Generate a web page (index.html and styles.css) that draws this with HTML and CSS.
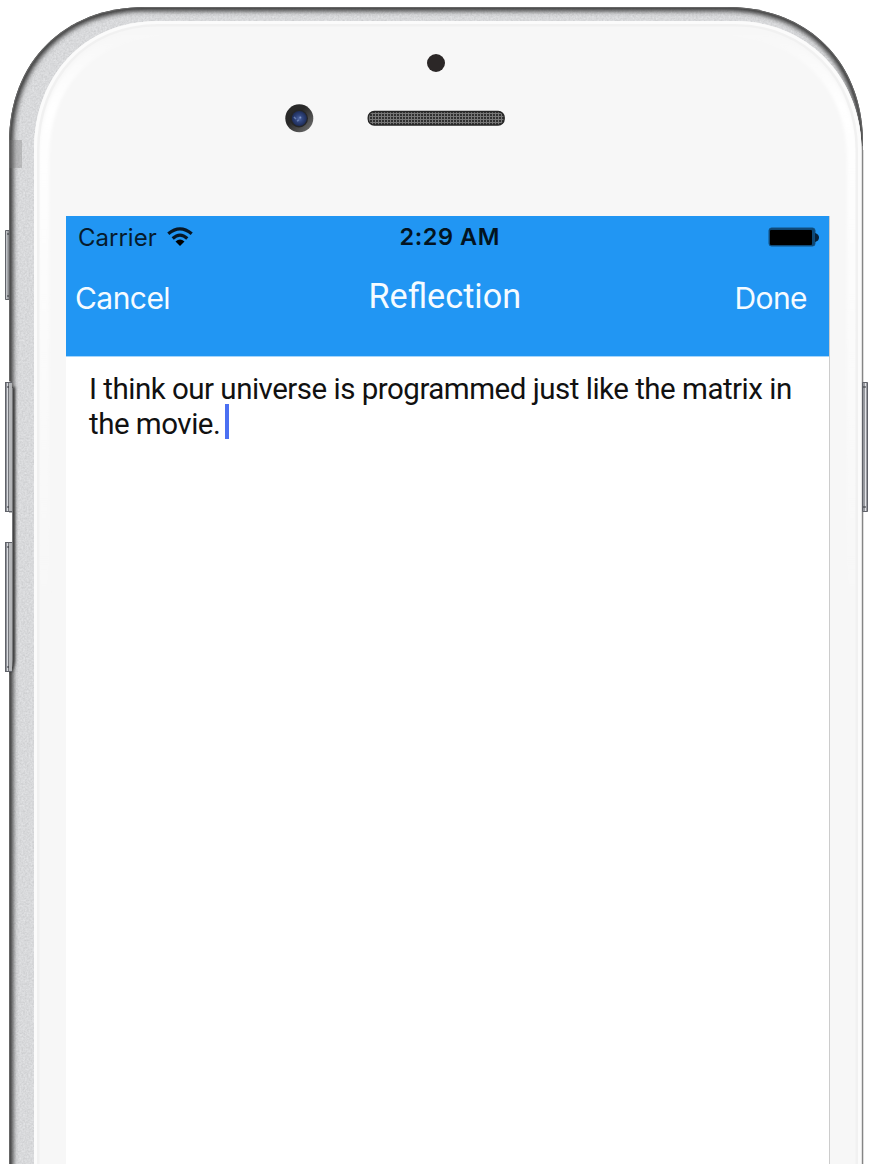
FILE: index.html
```html
<!DOCTYPE html>
<html lang="en">
<head>
<meta charset="utf-8">
<title>Reflection</title>
<link rel="stylesheet" href="styles.css">
</head>
<body>
<main class="phone">
  <svg class="device" width="873" height="1164" viewBox="0 0 873 1164" aria-hidden="true">
    <defs>
      <clipPath id="shell"><path d="M9 1180V143C9 62 64 7 145 7H727C808 7 863 62 863 143V1180Z"/></clipPath>
      <clipPath id="glass"><path d="M34 1180V150C34 76 84 21 158 21H735C806 21 861 76 861.500 150V1180Z"/></clipPath>
      <filter id="grain" x="0" y="0" width="100%" height="100%" color-interpolation-filters="sRGB">
        <feTurbulence type="fractalNoise" baseFrequency=".55" numOctaves="2" seed="4"/>
        <feColorMatrix values=".13 0 0 0 .782  .13 0 0 0 .786  .13 0 0 0 .794  0 0 0 0 1"/>
      </filter>
      <filter id="soft" filterUnits="userSpaceOnUse" x="0" y="0" width="873" height="1190"><feGaussianBlur stdDeviation="2.8"/></filter>
      <filter id="soft1" filterUnits="userSpaceOnUse" x="0" y="0" width="873" height="1190"><feGaussianBlur stdDeviation="1.5"/></filter>
      <linearGradient id="shine" x1="0" y1="30" x2="0" y2="620" gradientUnits="userSpaceOnUse">
        <stop offset="0" stop-color="#fff" stop-opacity="0"/><stop offset=".13" stop-color="#fff"/><stop offset=".35" stop-color="#fff" stop-opacity=".7"/><stop offset="1" stop-color="#fff" stop-opacity="0"/>
      </linearGradient>
      <linearGradient id="key"><stop offset="0" stop-color="#55575d"/><stop offset=".2" stop-color="#868990"/><stop offset=".34" stop-color="#e6e8ec"/><stop offset=".48" stop-color="#65676d"/><stop offset=".6" stop-color="#b8babd"/><stop offset="1" stop-color="#b0b1b3"/></linearGradient>
      <linearGradient id="keyRight"><stop offset="0" stop-color="#aaacb0"/><stop offset=".35" stop-color="#85878d"/><stop offset=".6" stop-color="#e3e4e8"/><stop offset="1" stop-color="#55565c"/></linearGradient>
      <linearGradient id="lensRing" x1="0" y1="0" x2="1" y2="1"><stop offset=".4" stop-color="#292929"/><stop offset="1" stop-color="#777"/></linearGradient>
      <radialGradient id="lens"><stop offset="0" stop-color="#5068a8"/><stop offset=".45" stop-color="#31467f"/><stop offset="1" stop-color="#1d2c58"/></radialGradient>
      <pattern id="mesh" x="367" y="111" width="3" height="3" patternUnits="userSpaceOnUse"><rect width="3" height="3" fill="#777"/><rect width="2" height="2" fill="#303030"/></pattern>
    </defs>
    <g clip-path="url(#shell)">
      <rect width="873" height="1164" filter="url(#grain)"/>
      <path d="M9 1180V143C9 62 64 7 145 7H727C808 7 863 62 863 143V1180" fill="none" stroke="#333" stroke-width="8" filter="url(#soft)"/>
      <path d="M9 1180V143C9 62 64 7 145 7H727C808 7 863 62 863 143V1180" fill="none" stroke="#666" stroke-width="2"/>
      <path d="M862.500 146V1180" stroke="#858585"/>
      <path d="M8 140h14v28H8z" fill="#777" fill-opacity=".33"/>
      <path d="M13 387V660q0 6-4 12" fill="none" stroke="#333" stroke-width="4" filter="url(#soft1)"/>
      <path d="M8 381h2q2 2 2 7V660q0 9-3 12H8z" fill="#b4b5b6"/>
      <path d="M0 513h12v29H0z" fill="#fff"/>
      <path d="M12.500 388V660q0 7-2 10" fill="none" stroke="#77787a"/>
    </g>
    <path d="M863.500 150V1180" stroke="#ddd"/>
    <g clip-path="url(#glass)">
      <path fill="#f7f7f7" d="M0 0h873v1164H0z"/>
      <path d="M44 610V160C44 83 91 32 169 32M724 32C800 32 852 83 852 160V610" fill="none" stroke="url(#shine)" stroke-width="10" filter="url(#soft1)"/>
      <path d="M34 1180V150C34 76 84 21 158 21H735C806 21 861 76 861 150V1180" fill="none" stroke="#f1f1f1" stroke-width="11"/>
      <path d="M34 1180V150C34 76 84 21 158 21H735C806 21 861 76 861 150V1180" fill="none" stroke="#fbfbfb" stroke-width="6"/>
    </g>
    <g stroke="#606269">
      <path fill="url(#key)" d="M9 230.500H5.500V299.500H9z"/>
      <path fill="url(#key)" stroke="none" d="M5 382H12V512H5zM5 542H12V672H5z"/>
      <path fill="none" d="M12 382.500H5.500V511.500H12M12 542.500H5.500V671.500H12"/>
      <path fill="url(#keyRight)" d="M862.500 382.500H867.500V511.500H862.500z"/>
      <path fill="none" stroke="#33343a" d="M7 234h2M7 296h2M7 387h2M7 507h2M7 547h2M7 667h2M863 387h3M863 507h3"/>
    </g>
    <circle cx="436" cy="63" r="9" fill="#2b2727"/>
    <circle cx="299.300" cy="118.300" r="14" fill="url(#lensRing)"/>
    <circle cx="299" cy="118.500" r="9" fill="#252628"/>
    <circle cx="299.300" cy="118.500" r="7.500" fill="url(#lens)"/>
    <path d="M294 117l2 2M297 121l2-1" stroke="#657cae" stroke-width="1.500"/>
    <circle cx="300.300" cy="117.600" r="1" fill="#8095c5"/>
    <rect x="368.200" y="111.500" width="136" height="13.500" rx="6" fill="url(#mesh)" stroke="#252525" stroke-width="1.300"/>
  </svg>
  <section class="screen">
    <header class="top">
      <div class="status">
        <div class="network"><span class="carrier">Carrier</span>
          <svg class="wifi" width="26" height="19" viewBox="0 0 26 19"><g fill="none" stroke="#071725" stroke-width="3.200"><path d="M1.300 6.800Q13-3.200 24.700 6.800"/><path d="M5.700 11.500Q13 4.800 20.300 11.500"/></g><path d="M8.500 14.500Q13 10.500 17.500 14.500L13 19Z" fill="#000"/></svg>
        </div>
        <time class="time">2:29 AM</time>
        <svg class="battery" width="51" height="20" viewBox="0 0 51 20"><rect x="1" y="1" width="46" height="18" rx="2.500" fill="#0d4775" stroke="#124e7e"/><rect x="2" y="3" width="42" height="15" rx="1" fill="#000"/><path d="M47 6q4 1 4 4.500T47 15z" fill="#062139"/></svg>
      </div>
      <nav class="nav"><span class="cancel">Cancel</span><h1 class="title">Reflection</h1><span class="done">Done</span></nav>
    </header>
    <div class="entry"><span class="line first">I think our universe is programmed just like the matrix in</span><span class="line second"><span class="words">the movie.</span><i class="caret"></i></span></div>
  </section>
</main>
</body>
</html>
```
FILE: styles.css
```css
* { box-sizing: border-box; }
body { margin: 0; background: #fff; }
.phone { position: relative; width: 873px; height: 1164px; padding: 216px 43px 0 66px; overflow: hidden; }
.device { position: absolute; inset: 0; }
.screen { position: relative; height: 948px; background: #fff; border-right: 1px solid #ccc; }
.top { width: 763px; height: 140px; background: #2196f3; box-shadow: 0 1px #a6d5fa; }
.status { height: 42px; padding: 0 10px 0 12px; display: grid; grid-template-columns: 1fr 100px 1fr; align-items: center; font-family: Inter, sans-serif; color: #061b2d; }
.network { display: flex; align-items: center; gap: 11px; }
.carrier { width: 78px; margin-top: 1px; font-size: 24px; line-height: 42px; }
.wifi { margin-top: -3px; }
.time { margin: -2px 0 0 1px; font-size: 23.5px; font-weight: 600; letter-spacing: .55px; color: #031421; white-space: nowrap; }
.battery { justify-self: end; margin-top: -2px; }
.nav { height: 80px; padding: 0 22px 0 9px; display: grid; grid-template-columns: 1fr 153px 1fr; align-items: center; color: #f5fbff; font: 30px/80px Inter, sans-serif; }
.cancel { letter-spacing: -.55px; }
.title { margin: -5px 0 0 4px; font: 400 34.2px/80px Roboto, sans-serif; white-space: nowrap; }
.done { justify-self: end; letter-spacing: -.6px; }
.entry { padding: 16px 0 0 23px; font: 29.5px/35px Roboto, sans-serif; letter-spacing: -.5px; color: #111; }
.line { display: flex; width: 720px; white-space: nowrap; }
.caret { width: 4px; height: 35px; margin: -3px 0 0 4.5px; background: #4b70f2; }
```
